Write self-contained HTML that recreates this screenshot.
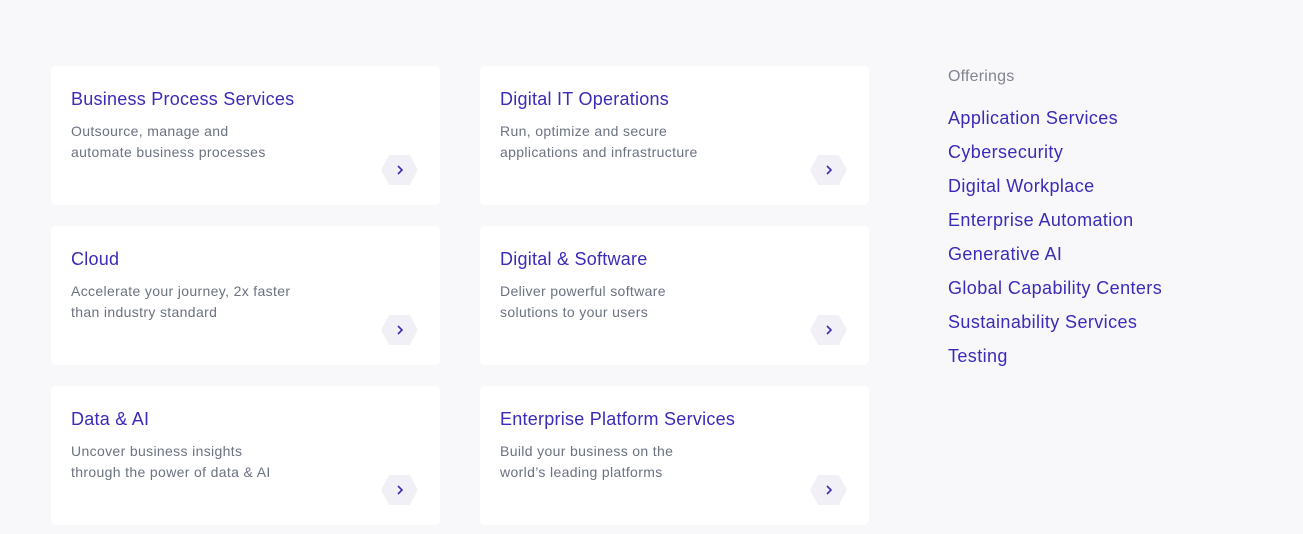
<!DOCTYPE html><html><head><style>
body{margin:0;width:1303px;height:534px;background:#f8f8fa;font-family:"Liberation Sans",sans-serif;position:relative;overflow:hidden}
.c{position:absolute;width:389px;height:139px;background:#fff;border-radius:5px}
.t{position:absolute;left:20px;top:23px;font-size:18px;letter-spacing:0.25px;color:#3a2bb8;white-space:nowrap}
.d{position:absolute;left:20px;top:55px;font-size:14px;letter-spacing:0.35px;line-height:21px;color:#6b7280;white-space:nowrap}
.b{position:absolute;left:330px;top:89px;width:37px;height:30px;background:#f1f0f7;clip-path:polygon(22% 0,78% 0,100% 50%,78% 100%,22% 100%,0 50%)}
.b svg{position:absolute;left:14px;top:9px}
.o{position:absolute;left:948px;font-size:18px;letter-spacing:0.4px;color:#3a2bb8;white-space:nowrap}
</style></head><body>
<div class="c" style="left:51px;top:66px"><div class="t">Business Process Services</div><div class="d">Outsource, manage and<br>automate business processes</div><div class="b"><svg width="10" height="12"><path d="M3 2l4 4-4 4" fill="none" stroke="#3a2bb8" stroke-width="1.6"/></svg></div></div>
<div class="c" style="left:480px;top:66px"><div class="t">Digital IT Operations</div><div class="d">Run, optimize and secure<br>applications and infrastructure</div><div class="b"><svg width="10" height="12"><path d="M3 2l4 4-4 4" fill="none" stroke="#3a2bb8" stroke-width="1.6"/></svg></div></div>
<div class="c" style="left:51px;top:226px"><div class="t">Cloud</div><div class="d">Accelerate your journey, 2x faster<br>than industry standard</div><div class="b"><svg width="10" height="12"><path d="M3 2l4 4-4 4" fill="none" stroke="#3a2bb8" stroke-width="1.6"/></svg></div></div>
<div class="c" style="left:480px;top:226px"><div class="t">Digital &amp; Software</div><div class="d">Deliver powerful software<br>solutions to your users</div><div class="b"><svg width="10" height="12"><path d="M3 2l4 4-4 4" fill="none" stroke="#3a2bb8" stroke-width="1.6"/></svg></div></div>
<div class="c" style="left:51px;top:386px"><div class="t">Data &amp; AI</div><div class="d">Uncover business insights<br>through the power of data &amp; AI</div><div class="b"><svg width="10" height="12"><path d="M3 2l4 4-4 4" fill="none" stroke="#3a2bb8" stroke-width="1.6"/></svg></div></div>
<div class="c" style="left:480px;top:386px"><div class="t">Enterprise Platform Services</div><div class="d">Build your business on the<br>world’s leading platforms</div><div class="b"><svg width="10" height="12"><path d="M3 2l4 4-4 4" fill="none" stroke="#3a2bb8" stroke-width="1.6"/></svg></div></div>
<div style="position:absolute;left:948px;top:68px;font-size:16px;letter-spacing:0.2px;color:#80848f">Offerings</div>
<div class="o" style="top:108px">Application Services</div>
<div class="o" style="top:142px">Cybersecurity</div>
<div class="o" style="top:176px">Digital Workplace</div>
<div class="o" style="top:210px">Enterprise Automation</div>
<div class="o" style="top:244px">Generative AI</div>
<div class="o" style="top:278px">Global Capability Centers</div>
<div class="o" style="top:312px">Sustainability Services</div>
<div class="o" style="top:346px">Testing</div>
</body></html>
